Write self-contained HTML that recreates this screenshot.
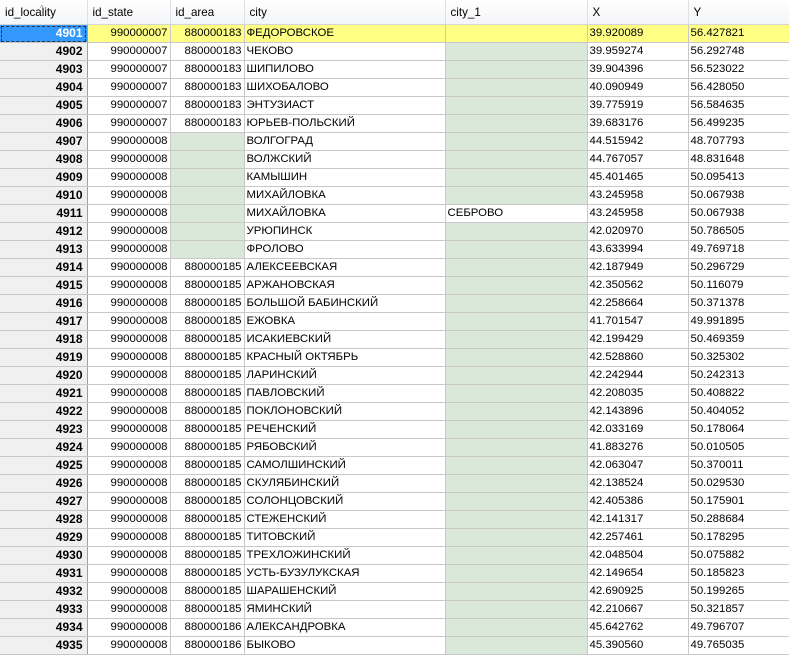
<!DOCTYPE html>
<html><head><meta charset="utf-8"><style>
body{margin:0;width:789px;height:655px;overflow:hidden;background:#fff;font-family:"Liberation Sans",Arial,sans-serif;font-size:11.4px;}
table{border-collapse:collapse;table-layout:fixed;width:789px;}
td,th{padding:0 2px;height:17px;border-right:1px solid #c8c8c8;border-bottom:1px solid #c8c8c8;white-space:nowrap;overflow:hidden;line-height:17px;}
th{height:24px;font-weight:normal;text-align:left;padding-left:5px;background:linear-gradient(#fff,#f4f5f7);border-right:1px solid #dde1e6;border-bottom:1px solid #d5d5d5;color:#000;position:relative;font-size:11.6px}
td:nth-child(1){background:#f0f0f0;font-weight:bold;text-align:right;padding-right:4px;border-right:1px solid #a0a0a0;font-size:12px}
td:nth-child(2),td:nth-child(3){text-align:right}
td:nth-child(5){background:#d9e8d8}
td.w{background:#fff!important}
td.g{background:#d9e8d8}
tr.y td{background:#ffff84}
tr.y td:nth-child(1){background:#3399ff;color:#fff;outline:1px dashed #333;outline-offset:-2px}
</style></head><body>
<table>
<colgroup><col style="width:87px"><col style="width:83px"><col style="width:74px"><col style="width:201px"><col style="width:142px"><col style="width:101px"><col style="width:101px"></colgroup>
<tr><th>id_locality<span style="position:absolute;left:40px;top:0;font-size:8px;color:#888">^</span></th><th>id_state</th><th>id_area</th><th>city</th><th>city_1</th><th>X</th><th>Y</th></tr>
<tr class="y"><td>4901</td><td>990000007</td><td>880000183</td><td>ФЕДОРОВСКОЕ</td><td></td><td>39.920089</td><td>56.427821</td></tr>
<tr><td>4902</td><td>990000007</td><td>880000183</td><td>ЧЕКОВО</td><td></td><td>39.959274</td><td>56.292748</td></tr>
<tr><td>4903</td><td>990000007</td><td>880000183</td><td>ШИПИЛОВО</td><td></td><td>39.904396</td><td>56.523022</td></tr>
<tr><td>4904</td><td>990000007</td><td>880000183</td><td>ШИХОБАЛОВО</td><td></td><td>40.090949</td><td>56.428050</td></tr>
<tr><td>4905</td><td>990000007</td><td>880000183</td><td>ЭНТУЗИАСТ</td><td></td><td>39.775919</td><td>56.584635</td></tr>
<tr><td>4906</td><td>990000007</td><td>880000183</td><td>ЮРЬЕВ-ПОЛЬСКИЙ</td><td></td><td>39.683176</td><td>56.499235</td></tr>
<tr><td>4907</td><td>990000008</td><td class="g"></td><td>ВОЛГОГРАД</td><td></td><td>44.515942</td><td>48.707793</td></tr>
<tr><td>4908</td><td>990000008</td><td class="g"></td><td>ВОЛЖСКИЙ</td><td></td><td>44.767057</td><td>48.831648</td></tr>
<tr><td>4909</td><td>990000008</td><td class="g"></td><td>КАМЫШИН</td><td></td><td>45.401465</td><td>50.095413</td></tr>
<tr><td>4910</td><td>990000008</td><td class="g"></td><td>МИХАЙЛОВКА</td><td></td><td>43.245958</td><td>50.067938</td></tr>
<tr><td>4911</td><td>990000008</td><td class="g"></td><td>МИХАЙЛОВКА</td><td class="w">СЕБРОВО</td><td>43.245958</td><td>50.067938</td></tr>
<tr><td>4912</td><td>990000008</td><td class="g"></td><td>УРЮПИНСК</td><td></td><td>42.020970</td><td>50.786505</td></tr>
<tr><td>4913</td><td>990000008</td><td class="g"></td><td>ФРОЛОВО</td><td></td><td>43.633994</td><td>49.769718</td></tr>
<tr><td>4914</td><td>990000008</td><td>880000185</td><td>АЛЕКСЕЕВСКАЯ</td><td></td><td>42.187949</td><td>50.296729</td></tr>
<tr><td>4915</td><td>990000008</td><td>880000185</td><td>АРЖАНОВСКАЯ</td><td></td><td>42.350562</td><td>50.116079</td></tr>
<tr><td>4916</td><td>990000008</td><td>880000185</td><td>БОЛЬШОЙ БАБИНСКИЙ</td><td></td><td>42.258664</td><td>50.371378</td></tr>
<tr><td>4917</td><td>990000008</td><td>880000185</td><td>ЕЖОВКА</td><td></td><td>41.701547</td><td>49.991895</td></tr>
<tr><td>4918</td><td>990000008</td><td>880000185</td><td>ИСАКИЕВСКИЙ</td><td></td><td>42.199429</td><td>50.469359</td></tr>
<tr><td>4919</td><td>990000008</td><td>880000185</td><td>КРАСНЫЙ ОКТЯБРЬ</td><td></td><td>42.528860</td><td>50.325302</td></tr>
<tr><td>4920</td><td>990000008</td><td>880000185</td><td>ЛАРИНСКИЙ</td><td></td><td>42.242944</td><td>50.242313</td></tr>
<tr><td>4921</td><td>990000008</td><td>880000185</td><td>ПАВЛОВСКИЙ</td><td></td><td>42.208035</td><td>50.408822</td></tr>
<tr><td>4922</td><td>990000008</td><td>880000185</td><td>ПОКЛОНОВСКИЙ</td><td></td><td>42.143896</td><td>50.404052</td></tr>
<tr><td>4923</td><td>990000008</td><td>880000185</td><td>РЕЧЕНСКИЙ</td><td></td><td>42.033169</td><td>50.178064</td></tr>
<tr><td>4924</td><td>990000008</td><td>880000185</td><td>РЯБОВСКИЙ</td><td></td><td>41.883276</td><td>50.010505</td></tr>
<tr><td>4925</td><td>990000008</td><td>880000185</td><td>САМОЛШИНСКИЙ</td><td></td><td>42.063047</td><td>50.370011</td></tr>
<tr><td>4926</td><td>990000008</td><td>880000185</td><td>СКУЛЯБИНСКИЙ</td><td></td><td>42.138524</td><td>50.029530</td></tr>
<tr><td>4927</td><td>990000008</td><td>880000185</td><td>СОЛОНЦОВСКИЙ</td><td></td><td>42.405386</td><td>50.175901</td></tr>
<tr><td>4928</td><td>990000008</td><td>880000185</td><td>СТЕЖЕНСКИЙ</td><td></td><td>42.141317</td><td>50.288684</td></tr>
<tr><td>4929</td><td>990000008</td><td>880000185</td><td>ТИТОВСКИЙ</td><td></td><td>42.257461</td><td>50.178295</td></tr>
<tr><td>4930</td><td>990000008</td><td>880000185</td><td>ТРЕХЛОЖИНСКИЙ</td><td></td><td>42.048504</td><td>50.075882</td></tr>
<tr><td>4931</td><td>990000008</td><td>880000185</td><td>УСТЬ-БУЗУЛУКСКАЯ</td><td></td><td>42.149654</td><td>50.185823</td></tr>
<tr><td>4932</td><td>990000008</td><td>880000185</td><td>ШАРАШЕНСКИЙ</td><td></td><td>42.690925</td><td>50.199265</td></tr>
<tr><td>4933</td><td>990000008</td><td>880000185</td><td>ЯМИНСКИЙ</td><td></td><td>42.210667</td><td>50.321857</td></tr>
<tr><td>4934</td><td>990000008</td><td>880000186</td><td>АЛЕКСАНДРОВКА</td><td></td><td>45.642762</td><td>49.796707</td></tr>
<tr><td>4935</td><td>990000008</td><td>880000186</td><td>БЫКОВО</td><td></td><td>45.390560</td><td>49.765035</td></tr>
</table>
</body></html>
